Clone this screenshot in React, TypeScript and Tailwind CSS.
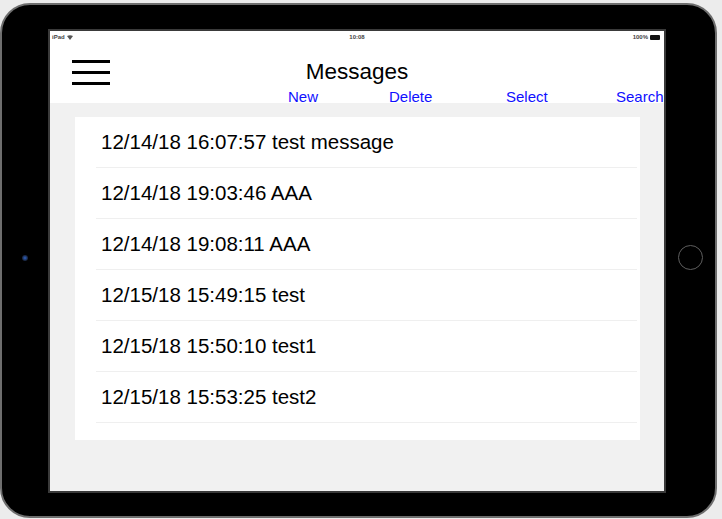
import React from "react";

const messages = [
  "12/14/18 16:07:57 test message",
  "12/14/18 19:03:46 AAA",
  "12/14/18 19:08:11 AAA",
  "12/15/18 15:49:15 test",
  "12/15/18 15:50:10 test1",
  "12/15/18 15:53:25 test2",
];

const actions = [
  { label: "New", w: "w-[101px]" },
  { label: "Delete", w: "w-[117px]" },
  { label: "Select", w: "w-[110px]" },
  { label: "Search", w: "" },
];

function StatusBar() {
  return (
    <div className="h-[12px] flex items-center justify-between px-[2px] text-[6px] leading-[6px] text-[#444] font-bold">
      <div className="flex items-center gap-[2px] w-[40px]">
        <span>iPad</span>
        <svg width="6" height="5" viewBox="0 0 6 5">
          <path d="M0 1 L3 5 L6 1 Q3 -0.5 0 1Z" fill="#555" />
        </svg>
      </div>
      <span>10:08</span>
      <div className="flex items-center justify-end gap-[2px] w-[40px] pr-[2px]">
        <span>100%</span>
        <div className="w-[10px] h-[5px] bg-[#111] rounded-[1px]" />
      </div>
    </div>
  );
}

export default function App() {
  return (
    <div
      className="w-[722px] h-[519px] bg-[#ececec] pt-[3px] overflow-hidden"
      style={{ fontFamily: '"Liberation Sans", Arial, sans-serif' }}
    >
      <div className="w-[717px] h-[515px] rounded-[30px] bg-black border-2 border-[#6e6e6e] pt-[24px] flex">
        {/* camera */}
        <div className="w-[46px] flex items-center justify-center pb-[30px]">
          <div className="w-[6px] h-[6px] rounded-full bg-[radial-gradient(circle,#2f62c4_0%,#1b2a48_60%,#0d0d0d_100%)]" />
        </div>

        {/* screen */}
        <div className="w-[618px] h-[464px] border-2 border-[#3a3a3a] bg-white flex flex-col overflow-hidden">
          <StatusBar />

          <div className="h-[60px] pt-[16px]">
            <div className="grid grid-cols-[1fr_auto_1fr] items-start h-[26px]">
              <div className="ml-[22px] mt-[1px] flex flex-col gap-[8px] w-[38px]">
                <div className="h-[3px] bg-black" />
                <div className="h-[3px] bg-black" />
                <div className="h-[3px] bg-black" />
              </div>
              <h1 className="text-[22.5px] leading-[26px] text-black">Messages</h1>
              <div />
            </div>
            <div className="flex pl-[238px] mt-[4px] text-[15px] leading-[15px] text-[#1010ff] whitespace-nowrap">
              {actions.map((a) => (
                <button key={a.label} className={`${a.w} shrink-0 text-left`}>
                  {a.label}
                </button>
              ))}
            </div>
          </div>

          <div className="flex-1 bg-[#f1f1f1] pt-[14px] pl-[25px]">
            <div className="w-[565px] bg-white pb-[17px]">
              {messages.map((m) => (
                <div
                  key={m}
                  className="ml-[21px] mr-[3px] pl-[5px] h-[51px] flex items-center border-b border-[#efefef] text-[20.5px] text-black"
                >
                  {m}
                </div>
              ))}
            </div>
          </div>
        </div>

        {/* home button */}
        <div className="flex-1 flex items-center justify-center pb-[30px]">
          <div className="w-[25px] h-[25px] rounded-full border-[1.5px] border-[#5e5e5e]" />
        </div>
      </div>
    </div>
  );
}
